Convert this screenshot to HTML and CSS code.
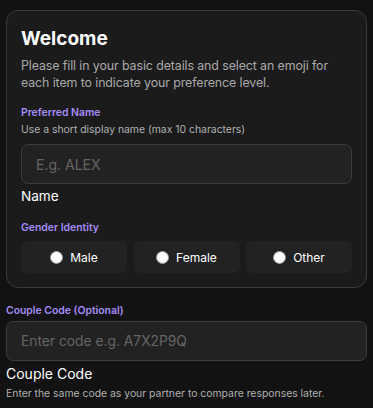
FILE: index.html
```html
<!DOCTYPE html>
<html>
<head>
<meta charset="utf-8">
<link rel="stylesheet" href="styles.css">
</head>
<body>
<div class="page">
  <section class="card">
    <h1 class="title">Welcome</h1>
    <p class="intro">Please fill in your basic details and select an emoji for each item to indicate your preference level.</p>

    <div class="field">
      <div class="label">Preferred Name</div>
      <div class="hint">Use a short display name (max 10 characters)</div>
      <input class="input name-input" type="text" placeholder="E.g. ALEX">
      <div class="field-caption">Name</div>
    </div>

    <div class="field gender">
      <div class="label">Gender Identity</div>
      <div class="options">
        <label class="option"><span class="radio"></span><span>Male</span></label>
        <label class="option"><span class="radio"></span><span>Female</span></label>
        <label class="option"><span class="radio"></span><span>Other</span></label>
      </div>
    </div>
  </section>

  <div class="couple">
    <div class="label">Couple Code (Optional)</div>
    <input class="input code-input" type="text" placeholder="Enter code e.g. A7X2P9Q">
    <div class="couple-caption">Couple Code</div>
    <div class="hint">Enter the same code as your partner to compare responses later.</div>
  </div>
</div>
</body>
</html>
```

FILE: styles.css
```css
* { box-sizing: border-box; }
html, body {
  margin: 0;
  background: #121212;
}
body {
  font-family: Inter, "Noto Sans", sans-serif;
  color: #ffffff;
}
.page {
  padding: 10px 6px 0 6px;
}
.card {
  background: #1b1b1b;
  border: 1px solid #3a3a3a;
  border-radius: 12px;
  padding: 14px 14px 14px 14px;
}
.title {
  margin: 0;
  font-size: 19px;
  font-weight: 700;
  line-height: 28px;
}
.intro {
  margin: 4px 0 0 0;
  font-size: 12.4px;
  letter-spacing: -0.1px;
  line-height: 17px;
  color: #a9a9a9;
}
.field {
  margin-top: 14px;
}
.label {
  font-size: 10.4px;
  font-weight: 600;
  line-height: 16px;
  color: #a48cf6;
}
.hint {
  font-size: 10.4px;
  line-height: 16px;
  color: #b0b0b0;
  margin-top: 1px;
}
.input {
  display: block;
  width: 100%;
  height: 40px;
  background: #222222;
  border: 1px solid #3c3c3c;
  border-radius: 7px;
  padding: 0 14px;
  font-family: Inter, "Noto Sans", sans-serif;
  font-size: 14px;
  color: #fff;
  outline: none;
}
.input::placeholder {
  color: #656565;
}
.name-input {
  margin-top: 6px;
}
.field-caption {
  font-size: 13.6px;
  line-height: 20px;
  margin-top: 2px;
}
.gender {
  margin-top: 14px;
}
.options {
  display: grid;
  grid-template-columns: repeat(3, 1fr);
  gap: 6.5px;
  margin-top: 5px;
}
.option {
  height: 32px;
  background: #222222;
  border-radius: 6px;
  display: flex;
  align-items: center;
  justify-content: center;
  gap: 7px;
  font-size: 12px;
  color: #fff;
}
.radio {
  width: 13px;
  height: 13px;
  border-radius: 50%;
  background: #ffffff;
  border: 1px solid #9a9a9a;
}
.couple {
  margin-top: 15px;
}
.code-input {
  margin-top: 2px;
  font-size: 13.8px;
}
.couple-caption {
  font-size: 14px;
  line-height: 20px;
  margin-top: 3px;
}
.couple .hint {
  margin-top: 2px;
}
```
